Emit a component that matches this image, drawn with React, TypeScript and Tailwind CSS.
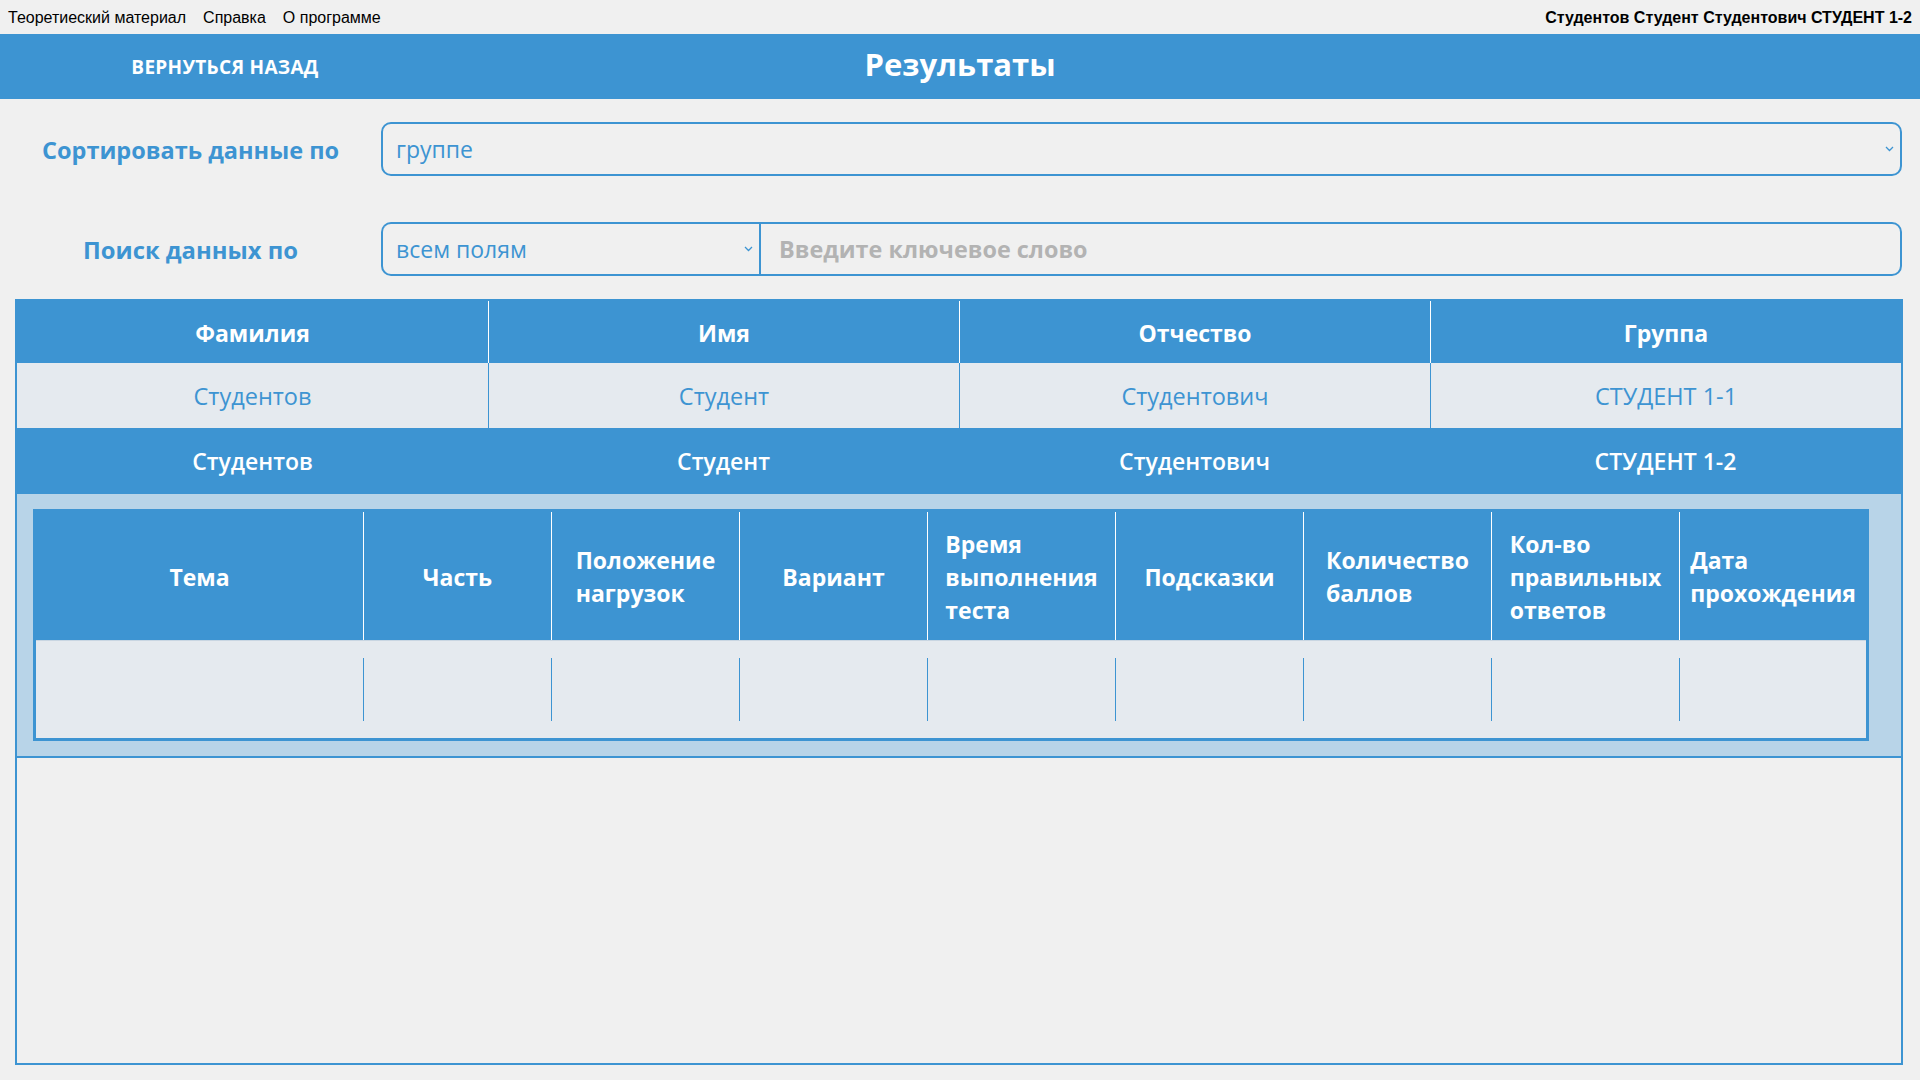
import React from "react";

const Chevron = () => (
  <svg width="9" height="6" viewBox="0 0 9 6" className="shrink-0">
    <polyline points="1,1 4.5,4.5 8,1" fill="none" stroke="#3d94d2" strokeWidth="1.3" />
  </svg>
);

const outerCols = ["Фамилия", "Имя", "Отчество", "Группа"];
const row1 = ["Студентов", "Студент", "Студентович", "СТУДЕНТ 1-1"];
const row2 = ["Студентов", "Студент", "Студентович", "СТУДЕНТ 1-2"];

const innerCols: string[][] = [
  ["Тема"],
  ["Часть"],
  ["Положение", "нагрузок"],
  ["Вариант"],
  ["Время", "выполнения", "теста"],
  ["Подсказки"],
  ["Количество", "баллов"],
  ["Кол-во", "правильных", "ответов"],
  ["Дата", "прохождения"],
];

export default function App() {
  return (
    <div className="w-[1920px] h-[1080px] bg-[#f0f0f0] flex flex-col overflow-hidden font-['Open_Sans',sans-serif]">
      {/* menu bar */}
      <div className="h-[34px] shrink-0 flex items-center justify-between pl-[8px] pr-[8px] pt-[2px] font-['Liberation_Sans',Arial,sans-serif] text-[16px] text-black">
        <div className="flex gap-[17px]">
          <span>Теоретиеский материал</span>
          <span>Справка</span>
          <span>О программе</span>
        </div>
        <div className="font-bold">Студентов Студент Студентович СТУДЕНТ 1-2</div>
      </div>

      {/* header */}
      <div className="h-[65px] shrink-0 bg-[#3d94d2] grid grid-cols-[450px_1fr_450px] items-center text-white font-bold">
        <div className="text-center text-[19px] tracking-[0.3px] pt-[2px]">ВЕРНУТЬСЯ НАЗАД</div>
        <div className="text-center text-[31px] leading-none pb-[4px]">Результаты</div>
        <div />
      </div>

      {/* sort row */}
      <div className="flex items-center mt-[23px] pr-[18px] shrink-0">
        <div className="w-[381px] text-center text-[23.5px] font-bold text-[#3d94d2] pt-[3px]">Сортировать данные по</div>
        <div className="flex-1 h-[54px] border-2 border-[#3d94d2] rounded-[10px] flex items-center justify-between pl-[13px] pr-[6px] text-[23px] text-[#3d94d2]">
          <span>группе</span>
          <Chevron />
        </div>
      </div>

      {/* search row */}
      <div className="flex items-center mt-[46px] pr-[18px] shrink-0">
        <div className="w-[381px] text-center text-[23.8px] font-bold text-[#3d94d2] pt-[3px]">Поиск данных по</div>
        <div className="w-[378px] h-[54px] border-2 border-r-0 border-[#3d94d2] rounded-l-[10px] flex items-center justify-between pl-[13px] pr-[6px] text-[23px] text-[#3d94d2]">
          <span>всем полям</span>
          <Chevron />
        </div>
        <div className="flex-1 h-[54px] border-2 border-[#3d94d2] rounded-r-[10px] flex items-center pl-[18px] pt-[2px] text-[23.4px] font-bold text-[#b3b3b3]">
          Введите ключевое слово
        </div>
      </div>

      {/* table */}
      <div className="ml-[15px] mr-[17px] mt-[23px] h-[766px] shrink-0 border-2 border-[#3d94d2] flex flex-col">
        <div className="h-[62px] bg-[#3d94d2] grid grid-cols-4 text-white font-bold text-[23px]">
          {outerCols.map((c, i) => (
            <div key={c} className={`flex items-center justify-center pt-[3px] ${i > 0 ? "border-l border-white" : ""}`}>
              {c}
            </div>
          ))}
        </div>
        <div className="h-[65px] bg-[#e5eaef] grid grid-cols-4 text-[#3d94d2] text-[23.5px]">
          {row1.map((c, i) => (
            <div key={i} className={`flex items-center justify-center pt-[2px] ${i > 0 ? "border-l border-[#3d94d2]" : ""}`}>
              {c}
            </div>
          ))}
        </div>
        <div className="h-[66px] bg-[#3d94d2] grid grid-cols-4 text-white font-semibold text-[23px]">
          {row2.map((c, i) => (
            <div key={i} className="flex items-center justify-center">
              {c}
            </div>
          ))}
        </div>

        {/* nested panel */}
        <div className="bg-[#b8d4e8] border-b-2 border-[#3d94d2] pt-[15px] pb-[15px] pl-[16px] pr-[32px]">
          <div className="border-[3px] border-[#3d94d2]">
            <div className="h-[128px] bg-[#3d94d2] grid grid-cols-[327px_repeat(7,188px)_1fr] text-white font-bold text-[23px] leading-[33px]">
              {innerCols.map((lines, i) => (
                <div key={i} className={`flex items-center justify-center pt-[2px] ${i > 0 ? "border-l border-white" : ""}`}>
                  <div className="text-left">
                    {lines.map((l) => (
                      <div key={l}>{l}</div>
                    ))}
                  </div>
                </div>
              ))}
            </div>
            <div className="h-[98px] bg-[#e5eaef] grid grid-cols-[327px_repeat(7,188px)_1fr] border-t border-[#c9d6e2]">
              {innerCols.map((_, i) => (
                <div key={i} className={i > 0 ? "my-[17px] border-l border-[#3d94d2]" : ""} />
              ))}
            </div>
          </div>
        </div>
        <div className="flex-1" />
      </div>
    </div>
  );
}
